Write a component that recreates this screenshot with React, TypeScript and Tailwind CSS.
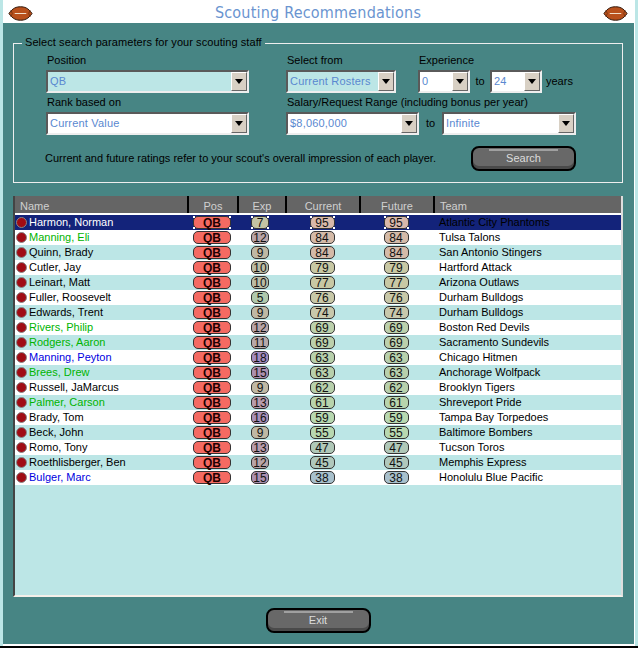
import React from "react";

const font = "font-['Liberation_Sans',Arial,sans-serif]";
const teal = "bg-[#478584]";
const cyan = "bg-[#bce6e6]";
const navy = "bg-[#13237a]";
const headerBg = "bg-[#656565]";
const btnBg = "bg-[#686868]";

type Player = {
  name: string;
  exp: number;
  cur: number;
  fut: number;
  team: string;
  color: string;
  expBg: string;
  rateBg: string;
};

const players: Player[] = [
  { name: "Harmon, Norman", exp: 7, cur: 95, fut: 95, team: "Atlantic City Phantoms", color: "text-white", expBg: "bg-[#c4c4a4]", rateBg: "bg-[#d8b8aa]" },
  { name: "Manning, Eli", exp: 12, cur: 84, fut: 84, team: "Tulsa Talons", color: "text-[#00b400]", expBg: "bg-[#b8a4a8]", rateBg: "bg-[#d4baa8]" },
  { name: "Quinn, Brady", exp: 9, cur: 84, fut: 84, team: "San Antonio Stingers", color: "text-black", expBg: "bg-[#c0b8a4]", rateBg: "bg-[#d4baa8]" },
  { name: "Cutler, Jay", exp: 10, cur: 79, fut: 79, team: "Hartford Attack", color: "text-black", expBg: "bg-[#bcbca4]", rateBg: "bg-[#c8c8a4]" },
  { name: "Leinart, Matt", exp: 10, cur: 77, fut: 77, team: "Arizona Outlaws", color: "text-black", expBg: "bg-[#bcbca4]", rateBg: "bg-[#c8c8a4]" },
  { name: "Fuller, Roosevelt", exp: 5, cur: 76, fut: 76, team: "Durham Bulldogs", color: "text-black", expBg: "bg-[#b0c8ac]", rateBg: "bg-[#c8c8a8]" },
  { name: "Edwards, Trent", exp: 9, cur: 74, fut: 74, team: "Durham Bulldogs", color: "text-black", expBg: "bg-[#c0b8a4]", rateBg: "bg-[#c8c8ac]" },
  { name: "Rivers, Philip", exp: 12, cur: 69, fut: 69, team: "Boston Red Devils", color: "text-[#00b400]", expBg: "bg-[#b8a4a8]", rateBg: "bg-[#bcd0ac]" },
  { name: "Rodgers, Aaron", exp: 11, cur: 69, fut: 69, team: "Sacramento Sundevils", color: "text-[#00b400]", expBg: "bg-[#b8a8a8]", rateBg: "bg-[#bcd0ac]" },
  { name: "Manning, Peyton", exp: 18, cur: 63, fut: 63, team: "Chicago Hitmen", color: "text-[#0000e0]", expBg: "bg-[#a48cc0]", rateBg: "bg-[#b8d0ac]" },
  { name: "Brees, Drew", exp: 15, cur: 63, fut: 63, team: "Anchorage Wolfpack", color: "text-[#00b400]", expBg: "bg-[#ac90b0]", rateBg: "bg-[#b8d0ac]" },
  { name: "Russell, JaMarcus", exp: 9, cur: 62, fut: 62, team: "Brooklyn Tigers", color: "text-black", expBg: "bg-[#c0b8a4]", rateBg: "bg-[#b8d0ac]" },
  { name: "Palmer, Carson", exp: 13, cur: 61, fut: 61, team: "Shreveport Pride", color: "text-[#00b400]", expBg: "bg-[#b89cac]", rateBg: "bg-[#b8d4ac]" },
  { name: "Brady, Tom", exp: 16, cur: 59, fut: 59, team: "Tampa Bay Torpedoes", color: "text-black", expBg: "bg-[#a890b8]", rateBg: "bg-[#b8d8b0]" },
  { name: "Beck, John", exp: 9, cur: 55, fut: 55, team: "Baltimore Bombers", color: "text-black", expBg: "bg-[#c0b8a4]", rateBg: "bg-[#b8d8b0]" },
  { name: "Romo, Tony", exp: 13, cur: 47, fut: 47, team: "Tucson Toros", color: "text-black", expBg: "bg-[#b89cac]", rateBg: "bg-[#b0c8b8]" },
  { name: "Roethlisberger, Ben", exp: 12, cur: 45, fut: 45, team: "Memphis Express", color: "text-black", expBg: "bg-[#b8a4a8]", rateBg: "bg-[#b0c8bc]" },
  { name: "Bulger, Marc", exp: 15, cur: 38, fut: 38, team: "Honolulu Blue Pacific", color: "text-[#0000e0]", expBg: "bg-[#ac90b0]", rateBg: "bg-[#a8c0cc]" },
];

const Football = () => (
  <svg width="25" height="15" viewBox="0 0 26 15">
    <path d="M1 7.5 C5 1.5 9 .5 13 .5 C17 .5 21 1.5 25 7.5 C21 13.5 17 14.5 13 14.5 C9 14.5 5 13.5 1 7.5 Z" fill="#b8501c" stroke="#2a1408" strokeWidth="1" />
    <path d="M7 7.5 H19" stroke="#f4e4d0" strokeWidth="1" />
    <path d="M3 4 Q6 7.5 3 11 M23 4 Q20 7.5 23 11" stroke="#7a3410" strokeWidth="1" fill="none" />
  </svg>
);

const Select = ({ value, width, shaded }: { value: string; width: string; shaded?: boolean }) => (
  <div className={`${width} h-[23px] flex items-center border-2 border-[#5a5a5a] border-r-[#eeeeee] border-b-[#eeeeee] ${shaded ? cyan : "bg-white"}`}>
    <span className="flex-1 pl-[2px] text-[11px] leading-none text-[#5a88d0] tracking-[0.2px] overflow-hidden whitespace-nowrap">{value}</span>
    <span className="w-[16px] h-[19px] flex items-center justify-center bg-[#d8d0c4] border-l border-t border-white border-r border-r-[#666666] border-b border-b-[#666666]">
      <svg width="8" height="5" viewBox="0 0 8 5">
        <path d="M0 0 H8 L4 5 Z" fill="#000" />
      </svg>
    </span>
  </div>
);

const GelButton = ({ label }: { label: string }) => (
  <button className={`relative w-[105px] h-[25px] rounded-[8px] border-[2px] border-black shadow-[inset_0_-3px_0_#4a4a4a] ${btnBg} text-[11px] text-[#dcdcdc] leading-none`}>
    <span className="absolute left-[16px] right-[16px] top-[1px] h-[2px] bg-[#a0a0a0]" />
    {label}
  </button>
);

const Pill = ({ value, width, bg, focus }: { value: string | number; width: string; bg: string; focus?: boolean }) => (
  <span className={`relative flex ${width} h-[13px] items-center justify-center rounded-[5px] border border-[#333333] ${bg} text-[12px] leading-none text-[#111111]`}>
    {value}
    {focus && (
      <>
        <span className="absolute -left-[1px] -top-[1px] w-[2px] h-[2px] bg-white" />
        <span className="absolute -right-[1px] -top-[1px] w-[2px] h-[2px] bg-white" />
        <span className="absolute -left-[1px] -bottom-[1px] w-[2px] h-[2px] bg-white" />
        <span className="absolute -right-[1px] -bottom-[1px] w-[2px] h-[2px] bg-white" />
      </>
    )}
  </span>
);

const columns = "grid grid-cols-[172px_50px_48px_74px_74px_188px]";

const Row = ({ p, i }: { p: Player; i: number }) => {
  const selected = i === 0;
  const rowBg = selected ? navy : i % 2 === 1 ? "bg-white" : cyan;
  return (
    <div className={`${columns} h-[15px] items-center ${rowBg}`}>
      <div className={`flex items-center pl-[1px] text-[11px] leading-none whitespace-nowrap ${p.color}`}>
        <span className="w-[11px] h-[11px] -mt-[1px] mr-[2px] rounded-full bg-[#a00c14] border border-[#888888]" />
        {p.name}
      </div>
      <div className="flex justify-center">
        <Pill value="QB" width="w-[38px]" bg="bg-[#f46a62] font-bold text-[#200000]" focus={selected} />
      </div>
      <div className="flex justify-center pr-[2px]">
        <Pill value={p.exp} width="w-[18px]" bg={p.expBg} focus={selected} />
      </div>
      <div className="flex justify-center">
        <Pill value={p.cur} width="w-[25px]" bg={p.rateBg} focus={selected} />
      </div>
      <div className="flex justify-center">
        <Pill value={p.fut} width="w-[25px]" bg={p.rateBg} focus={selected} />
      </div>
      <div className="pl-[6px] text-[11px] leading-none text-black whitespace-nowrap">{p.team}</div>
    </div>
  );
};

const App = () => {
  return (
    <div className={`${font} flex flex-col w-[638px] h-[648px] overflow-hidden bg-white text-black`}>
      <div className="flex flex-1 min-h-0">
        <div className={`w-[3px] ${cyan}`} />

        <div className="flex flex-col w-[632px]">
          {/* title bar */}
          <div className="flex h-[23px] shrink-0 items-center justify-between pt-[3px] pl-[5px] pr-[7px] bg-white">
            <Football />
            <h1 className="font-['DejaVu_Sans_Condensed','DejaVu_Sans',sans-serif] text-[16px] leading-none tracking-[0.2px] text-[#6a94d0]">
              Scouting Recommendations
            </h1>
            <Football />
          </div>

          <div className={`flex flex-1 flex-col pt-[20px] pl-[10px] pr-[11px] border-r border-b-2 border-white ${teal}`}>
            {/* search parameters */}
            <div className="relative h-[140px] shrink-0 border border-[#eeeeee] pl-[32px] pt-[11px] text-[11px] leading-none">
              <span className={`absolute left-[8px] -top-[7px] px-[3px] tracking-[0.07px] whitespace-nowrap ${teal}`}>
                Select search parameters for your scouting staff
              </span>

              <div className="flex h-[37px]">
                <div className="w-[240px]">
                  <div className="h-[15px] pl-[1px]">Position</div>
                  <Select value="QB" width="w-[203px]" shaded />
                </div>
                <div className="w-[132px]">
                  <div className="h-[15px] pl-[1px]">Select from</div>
                  <Select value="Current Rosters" width="w-[110px]" shaded />
                </div>
                <div>
                  <div className="h-[15px] pl-[1px]">Experience</div>
                  <div className="flex items-center">
                    <Select value="0" width="w-[52px]" />
                    <span className="w-[20px] text-center">to</span>
                    <Select value="24" width="w-[52px]" />
                    <span className="pl-[4px]">years</span>
                  </div>
                </div>
              </div>

              <div className="flex mt-[5px]">
                <div className="w-[240px]">
                  <div className="h-[15px] pl-[1px]">Rank based on</div>
                  <Select value="Current Value" width="w-[203px]" />
                </div>
                <div>
                  <div className="h-[15px] pl-[1px]">Salary/Request Range (including bonus per year)</div>
                  <div className="flex items-center">
                    <Select value="$8,060,000" width="w-[133px]" />
                    <span className="w-[23px] text-center">to</span>
                    <Select value="Infinite" width="w-[134px]" />
                  </div>
                </div>
              </div>

              <div className="flex items-center mt-[11px]">
                <span className="w-[426px] -ml-[1px] whitespace-nowrap">
                  Current and future ratings refer to your scout's overall impression of each player.
                </span>
                <GelButton label="Search" />
              </div>
            </div>

            {/* results */}
            <div className={`flex flex-col h-[401px] shrink-0 mt-[13px] border-l-2 border-[#444444] border-b-2 border-b-[#f4f0ea] border-r-2 border-r-[#dddddd] ${cyan}`}>
              <div className={`${columns} h-[19px] shrink-0 border-b-2 border-white text-[11px] leading-none text-[#d0d0d0]`}>
                <div className={`${headerBg} flex items-center pl-[5px] pt-[3px]`}>Name</div>
                <div className={`${headerBg} flex items-center justify-center pt-[3px] border-l-2 border-black`}>Pos</div>
                <div className={`${headerBg} flex items-center justify-center pt-[3px] border-l-2 border-black`}>Exp</div>
                <div className={`${headerBg} flex items-center justify-center pt-[3px] border-l-2 border-black`}>Current</div>
                <div className={`${headerBg} flex items-center justify-center pt-[3px] border-l-2 border-black`}>Future</div>
                <div className={`${headerBg} flex items-center pl-[5px] pt-[3px] border-l-2 border-black`}>Team</div>
              </div>
              {players.map((p, i) => (
                <Row key={p.name} p={p} i={i} />
              ))}
            </div>

            <div className="flex justify-center mt-[11px]">
              <GelButton label="Exit" />
            </div>
          </div>
        </div>

        <div className={`w-[3px] ${cyan}`} />
      </div>
      <div className="h-[2px] shrink-0 bg-black" />
    </div>
  );
};

export default App;
